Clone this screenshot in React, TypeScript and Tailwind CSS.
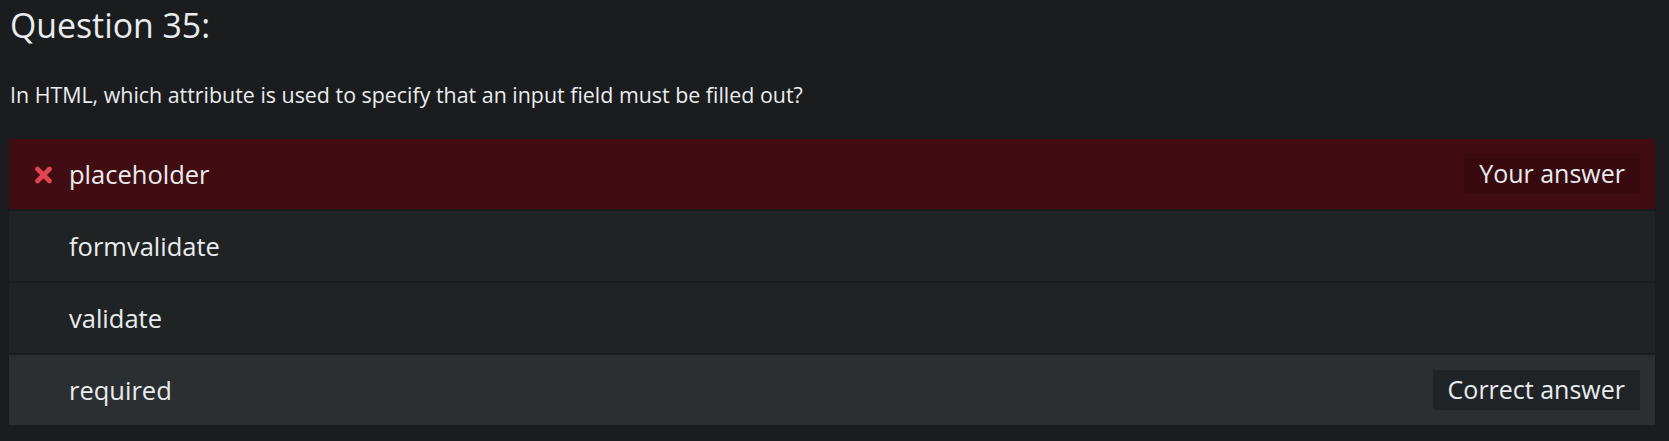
import React from "react";

const font = { fontFamily: '"Segoe UI", "Open Sans", "Noto Sans", sans-serif' };

function XIcon() {
  return (
    <svg width="19" height="18" viewBox="0 0 19 18" className="shrink-0">
      <path d="M3.5 3 L15.5 15 M15.5 3 L3.5 15" stroke="#e4444f" strokeWidth="4.6" strokeLinecap="round" fill="none" />
    </svg>
  );
}

type Row = { text: string; kind: "wrong" | "plain" | "correct" };

const rows: Row[] = [
  { text: "placeholder", kind: "wrong" },
  { text: "formvalidate", kind: "plain" },
  { text: "validate", kind: "plain" },
  { text: "required", kind: "correct" },
];

export default function App() {
  return (
    <div
      className="h-[441px] w-full overflow-hidden bg-[#1b1c1e] pl-[9px] pr-[14px] pt-[3px] text-[#e9ecef]"
      style={font}
    >
      <h1 className="pl-[1px] text-[33.8px] leading-[44px] font-normal">Question 35:</h1>
      <p className="mt-[34px] pl-[1px] text-[21.4px] leading-[28px]">
        In HTML, which attribute is used to specify that an input field must be filled out?
      </p>
      <div className="mt-[30px] flex flex-col gap-[2px]">
        {rows.map((r) => {
          const bg =
            r.kind === "wrong" ? "bg-[#420d12]" : r.kind === "correct" ? "bg-[#2b2f32]" : "bg-[#202324]";
          return (
            <div key={r.text} className={`flex h-[70px] items-center pr-[15px] ${bg}`}>
              <div className="flex w-[60px] shrink-0 items-center justify-center pl-[8px] pt-[2px]">
                {r.kind === "wrong" ? <XIcon /> : null}
              </div>
              <span className="flex-1 text-[25.5px] leading-[30px]">{r.text}</span>
              {r.kind === "wrong" ? (
                <span className="flex h-[40px] items-center bg-[#380a10] pl-[15px] pr-[15px] text-[25px]">
                  Your answer
                </span>
              ) : null}
              {r.kind === "correct" ? (
                <span className="flex h-[40px] items-center bg-[#212426] pl-[15px] pr-[15px] text-[25px]">
                  Correct answer
                </span>
              ) : null}
            </div>
          );
        })}
      </div>
    </div>
  );
}
